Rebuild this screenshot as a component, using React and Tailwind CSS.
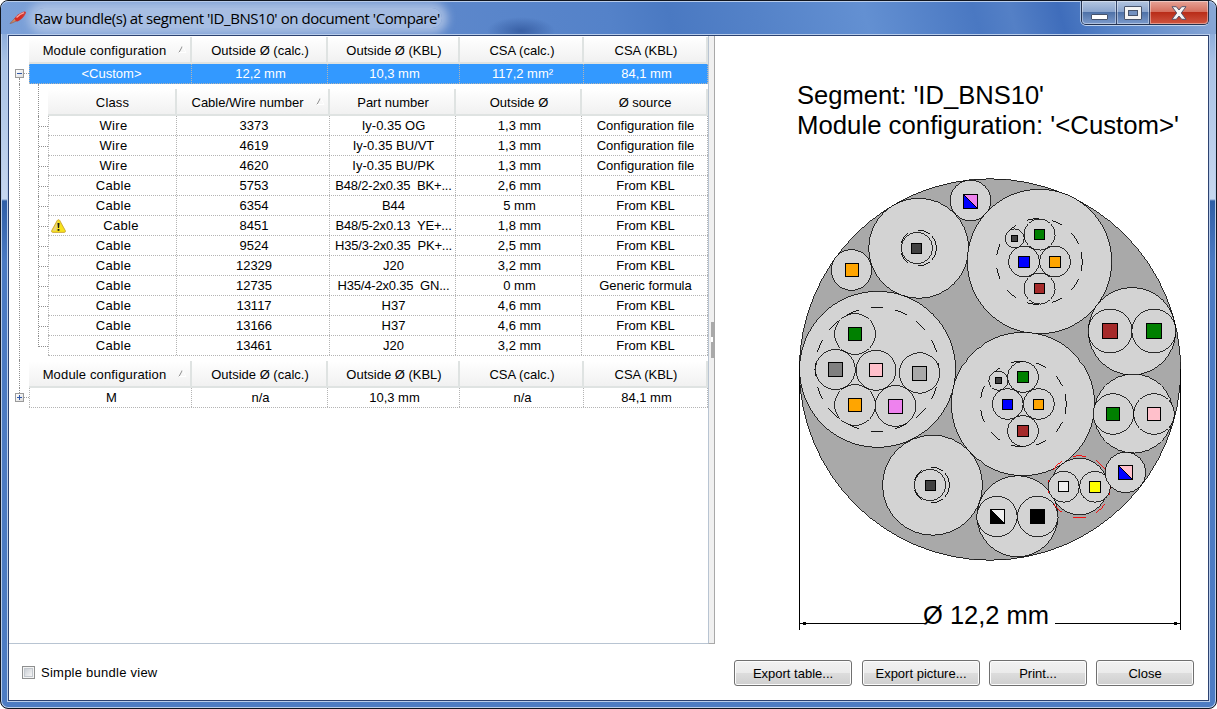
import React from 'react';

const MAIN_WIDTHS = ['w-[163px]', 'w-[136px]', 'w-[132px]', 'w-[124px]', 'w-[124px]'];
const CHILD_WIDTHS = ['w-[129px]', 'w-[153px]', 'w-[126px]', 'w-[126px]', 'w-[126px]'];
const MAIN_TITLES = ['Module configuration', 'Outside Ø (calc.)', 'Outside Ø (KBL)', 'CSA (calc.)', 'CSA (KBL)'];
const CHILD_TITLES = ['Class', 'Cable/Wire number', 'Part number', 'Outside Ø', 'Ø source'];

const ROWS = [
  ['Wire', '3373', 'Iy-0.35 OG', '1,3 mm', 'Configuration file'],
  ['Wire', '4619', 'Iy-0.35 BU/VT', '1,3 mm', 'Configuration file'],
  ['Wire', '4620', 'Iy-0.35 BU/PK', '1,3 mm', 'Configuration file'],
  ['Cable', '5753', 'B48/2-2x0.35\u00a0 BK+...', '2,6 mm', 'From KBL'],
  ['Cable', '6354', 'B44', '5 mm', 'From KBL'],
  ['Cable', '8451', 'B48/5-2x0.13\u00a0 YE+...', '1,8 mm', 'From KBL', true],
  ['Cable', '9524', 'H35/3-2x0.35\u00a0 PK+...', '2,5 mm', 'From KBL'],
  ['Cable', '12329', 'J20', '3,2 mm', 'From KBL'],
  ['Cable', '12735', 'H35/4-2x0.35\u00a0 GN...', '0 mm', 'Generic formula'],
  ['Cable', '13117', 'H37', '4,6 mm', 'From KBL'],
  ['Cable', '13166', 'H37', '4,6 mm', 'From KBL'],
  ['Cable', '13461', 'J20', '3,2 mm', 'From KBL'],
];

function SortMark() {
  return (
    <svg className="h-[9px] w-[9px] shrink-0" viewBox="0 0 9 9">
      <path d="M1 7.5L4.5 1" stroke="#8f8f8f" strokeWidth="1" fill="none" />
      <path d="M4.5 1L8 7.5H1" stroke="#ffffff" strokeWidth="1" fill="none" />
    </svg>
  );
}

function HeaderRow({ titles, widths, sorted }) {
  return (
    <div className="flex h-7 pt-px">
      {titles.map((t, i) => (
        <div
          key={t}
          className={`${widths[i]} flex items-center border-r-2 border-b-2 border-[#dfe3e2] bg-gradient-to-b from-white to-[#f1f1f1] pl-[2px]`}
        >
          <span className={`flex-1 pt-[2px] text-center whitespace-pre ${i === 0 ? 'tracking-[0.15px]' : ''}`}>{t}</span>
          {sorted === i && (
            <span className="mr-[3px] flex">
              <SortMark />
            </span>
          )}
        </div>
      ))}
    </div>
  );
}

function Expander({ open }) {
  return (
    <span className="flex h-[9px] w-[9px] items-center justify-center border border-[#9a9a9a] bg-gradient-to-br from-white to-[#dedede]">
      <svg className="h-[5px] w-[5px]" viewBox="0 0 5 5" shapeRendering="crispEdges">
        <rect x="0" y="2" width="5" height="1" fill="#2f56a8" />
        {!open && <rect x="2" y="0" width="1" height="5" fill="#2f56a8" />}
      </svg>
    </span>
  );
}

function Gutter({ open }) {
  return (
    <div className="flex w-5 shrink-0 flex-col">
      <div className="ml-[10px] h-[5px] w-0 border-l border-dotted border-[#8f8f8f]" hidden={open} />
      <div className={`flex items-center pl-[6px] ${open ? 'mt-[5px]' : ''}`}>
        <Expander open={open} />
        <span className="h-0 flex-1 border-t border-dotted border-[#a0a0a0]" />
      </div>
      {open && <div className="ml-[10px] w-0 flex-1 border-l border-dotted border-[#8f8f8f]" />}
    </div>
  );
}

function Warning() {
  return (
    <svg className="h-[14px] w-[15px]" viewBox="0 0 15 14">
      <path d="M7.5 0.7Q8.3 0.7 8.8 1.6L14.3 11.6Q14.8 13.4 13.4 13.4H1.6Q0.2 13.4 0.7 11.6L6.2 1.6Q6.7 0.7 7.5 0.7Z" fill="#f7e21c" stroke="#c9a43a" strokeWidth="0.9" />
      <path d="M7 1.8L1.7 11.8H5Z" fill="#e9cf86" />
      <path d="M6.5 4H8.5L8.1 9H6.9Z" fill="#1a1a1a" />
      <rect x="6.6" y="10" width="1.8" height="1.8" fill="#1a1a1a" />
    </svg>
  );
}

function MainRow({ cells, selected }) {
  return (
    <div
      className={`flex h-5 border-b border-dotted border-[#b4b4b4] ${selected ? 'bg-[#3399ff] text-white' : ''}`}
    >
      {cells.map((c, i) => (
        <div
          key={i}
          className={`${MAIN_WIDTHS[i]} flex items-center justify-center border-r border-dotted border-[#b4b4b4] pl-[2px] ${i === 0 ? 'border-l' : ''}`}
        >
          {c}
        </div>
      ))}
    </div>
  );
}

function cellTracking(i, text) {
  if (i === 0) return 'tracking-[0.35px]';
  if (text.endsWith('...')) return 'tracking-[-0.2px]';
  return '';
}

function ChildRow({ row, last }) {
  return (
    <div className="flex h-5">
      <div className="flex w-[19px] pl-[9px]">
        <div className={`w-full border-l border-dotted border-[#8f8f8f] ${last ? 'h-[11px]' : 'h-full'}`}>
          <div className="h-[11px] border-b border-dotted border-[#8f8f8f]" />
        </div>
      </div>
      <div className="flex border-b border-dotted border-[#b4b4b4]">
        {row.slice(0, 5).map((c, i) => (
          <div
            key={i}
            className={`${CHILD_WIDTHS[i]} flex items-center border-r border-dotted border-[#b4b4b4] pl-[2px] ${i === 0 ? 'border-l' : ''}`}
          >
            {i === 0 && row[5] && <Warning />}
            <span className={`flex-1 text-center whitespace-pre ${cellTracking(i, c)}`}>{c}</span>
          </div>
        ))}
      </div>
    </div>
  );
}

function Tree() {
  return (
    <div className="flex w-[699px] flex-col border-b border-[#b8c4d2] text-[13px] leading-[19px]">
      <div className="pl-5">
        <HeaderRow titles={MAIN_TITLES} widths={MAIN_WIDTHS} sorted={0} />
      </div>
      <div className="flex">
        <Gutter open />
        <MainRow selected cells={['<Custom>', '12,2 mm', '10,3 mm', '117,2 mm²', '84,1 mm']} />
      </div>
      <div className="flex">
        <div className="flex w-5 pl-[10px]">
          <div className="w-0 border-l border-dotted border-[#8f8f8f]" />
        </div>
        <div className="flex flex-col">
          <div className="flex">
            <div className="flex w-[19px] pl-[9px]">
              <div className="w-0 border-l border-dotted border-[#8f8f8f]" />
            </div>
            <div className="pt-1">
              <HeaderRow titles={CHILD_TITLES} widths={CHILD_WIDTHS} sorted={1} />
            </div>
          </div>
          {ROWS.map((r, i) => (
            <ChildRow key={r[1]} row={r} last={i === ROWS.length - 1} />
          ))}
          <div className="h-1" />
        </div>
      </div>
      <div className="flex">
        <div className="flex w-5 pl-[10px]">
          <div className="w-0 border-l border-dotted border-[#8f8f8f]" />
        </div>
        <HeaderRow titles={MAIN_TITLES} widths={MAIN_WIDTHS} sorted={0} />
      </div>
      <div className="flex">
        <Gutter />
        <MainRow cells={['M', 'n/a', '10,3 mm', 'n/a', '84,1 mm']} />
      </div>
    </div>
  );
}

/* Cross-section drawing */

const GREEN = '#008000';
const BROWN = '#a52a2a';
const ORANGE = '#ffa500';
const BLUE = '#0000ff';
const PINK = '#ffc0cb';
const VIOLET = '#ee82ee';
const DARK = '#404040';

// c: [cx, cy, r]; shield: [cx, cy, r, count, half dash deg, first half dash deg, colour]; cores: [cx, cy, r, square, colour, colour2]
const BUNDLE = [
  { c: [970.5, 200.5, 20.3], cores: [[970.5, 201, 0, 14, BLUE, VIOLET]] },
  { c: [851.5, 270, 20.3], cores: [[852, 270, 0, 13, ORANGE]] },
  { c: [918.7, 248.3, 50], shield: [918.5, 248, 18, 5, 20, 40, '#000'], cores: [[916.9, 248, 15.7, 10, DARK]] },
  {
    c: [1039.5, 261.5, 72.2],
    shield: [1039.3, 261.5, 43, 11, 8, 13, '#000'],
    cores: [
      [1039.5, 234.5, 15.5, 10, GREEN],
      [1014.7, 238.4, 9.5, 6, DARK],
      [1024, 261.5, 15.5, 11, BLUE],
      [1055, 261.5, 15.5, 11, ORANGE],
      [1039.5, 288.5, 15.5, 10, BROWN],
    ],
  },
  {
    c: [877.6, 369.3, 78],
    shield: [877, 369.3, 62, 16, 6, 6, '#000'],
    cores: [
      [855, 334, 20.4, 13, GREEN],
      [835.3, 369.5, 20, 14, '#808080'],
      [876, 370.3, 20, 13, PINK],
      [919.5, 373, 20.2, 14, '#a9a9a9'],
      [855, 405, 20.4, 13, ORANGE],
      [895.5, 406, 20.4, 14, VIOLET],
    ],
  },
  { c: [1132, 331.2, 43.7], cores: [[1110.2, 331, 22, 15, BROWN], [1153.8, 331, 22, 15, GREEN]] },
  {
    c: [1023, 404, 71.7],
    shield: [1023.3, 404, 43, 11, 8, 13, '#000'],
    cores: [
      [1023, 377, 15.5, 11, GREEN],
      [998.4, 380.7, 9.6, 6, DARK],
      [1007.7, 404, 15.5, 10, BLUE],
      [1038.8, 404, 15.5, 10, ORANGE],
      [1023, 431, 15.5, 11, BROWN],
    ],
  },
  { c: [1133.5, 413.5, 39.5], cores: [[1113.3, 414, 20.3, 13, GREEN], [1154, 414, 20.3, 13, PINK]] },
  { c: [1017.5, 516.3, 40.5], cores: [[997, 516.5, 20.2, 14, '#000000', '#f0f0f0'], [1037.7, 516.5, 20.3, 14, '#000000']] },
  {
    c: [1079.3, 486.5, 28.3],
    shield: [1079.3, 486.7, 31, 8, 12, 16, '#ff0000'],
    cores: [[1063.7, 486.7, 15.5, 10, '#f0f0f0'], [1095, 486.7, 15.5, 11, '#ffff00']],
  },
  { c: [1125.5, 472.5, 20.2], cores: [[1125.5, 472.5, 0, 14, BLUE, PINK]] },
  { c: [932.5, 485.2, 50], shield: [931.7, 485, 17.9, 5, 20, 40, '#000'], cores: [[930, 485, 15.7, 10, DARK]] },
];

function shieldPath([cx, cy, r, n, half, first]) {
  const pt = (deg) => {
    const a = (deg * Math.PI) / 180;
    return `${(cx + r * Math.cos(a)).toFixed(2)} ${(cy + r * Math.sin(a)).toFixed(2)}`;
  };
  let d = '';
  for (let k = 0; k < n; k++) {
    const mid = (k * 360) / n;
    const h = k === 0 ? first : half;
    d += `M${pt(mid - h)}A${r} ${r} 0 0 1 ${pt(mid + h)}`;
  }
  return d;
}

function Core({ core: [cx, cy, r, s, color, color2] }) {
  const x = Math.round(cx - s / 2 - 0.5) + 0.5;
  const y = Math.round(cy - s / 2 - 0.5) + 0.5;
  return (
    <g>
      {r > 0 && <circle cx={cx} cy={cy} r={r} fill="#d3d3d3" stroke="#000" strokeWidth="0.8" />}
      <rect x={x} y={y} width={s} height={s} fill={color} />
      {color2 && <path d={`M${x} ${y}H${x + s}V${y + s}Z`} fill={color2} />}
      {color2 && <path d={`M${x} ${y}L${x + s} ${y + s}`} stroke="#000" />}
      <rect x={x} y={y} width={s} height={s} fill="none" stroke="#000" />
    </g>
  );
}

function Diagram() {
  return (
    <svg className="h-[608px] w-[493px]" viewBox="715 36 493 608">
      <g fontFamily="'Liberation Sans', Arial, sans-serif" fontSize="25.5" fill="#000">
        <text x="797" y="104" textLength="247" lengthAdjust="spacingAndGlyphs">Segment: 'ID_BNS10'</text>
        <text x="797" y="134" textLength="382" lengthAdjust="spacingAndGlyphs">Module configuration: '&lt;Custom&gt;'</text>
        <text x="923" y="624" textLength="126" lengthAdjust="spacingAndGlyphs">Ø 12,2 mm</text>
      </g>
      <g shapeRendering="crispEdges" strokeWidth="1">
        <circle cx="990" cy="369.5" r="190.7" fill="#a9a9a9" stroke="#000" strokeWidth="0.8" />
        {BUNDLE.map((b, i) => (
          <g key={i}>
            <circle cx={b.c[0]} cy={b.c[1]} r={b.c[2]} fill="#d3d3d3" stroke="#000" strokeWidth="0.8" />
            {b.shield && <path d={shieldPath(b.shield)} fill="none" stroke={b.shield[6]} strokeWidth="0.9" />}
            {b.cores.map((c, j) => (
              <Core key={j} core={c} />
            ))}
          </g>
        ))}
        <path d="M799.5 369V630M1180.5 369V630M799 623.5H926M1055 623.5H1181" stroke="#000" fill="none" />
        <path d="M800 623.5L806 621.5V625.5ZM1180 623.5L1174 621.5V625.5Z" fill="#000" />
      </g>
    </svg>
  );
}

function Button({ children, width }) {
  return (
    <button
      className={`${width} h-[26px] rounded-[3px] border border-[#707070] bg-[linear-gradient(#f2f2f2_0%,#ebebeb_48%,#dddddd_50%,#cfcfcf_100%)] text-[13px] leading-none shadow-[inset_0_0_0_1px_#fcfcfc]`}
    >
      {children}
    </button>
  );
}

function AppIcon() {
  return (
    <svg className="h-4 w-[18px]" viewBox="0 0 18 16">
      <path d="M1 13.5L6 8L8.5 10.5L3 13Z" fill="#c98b6a" stroke="#8d4b35" strokeWidth="0.5" />
      <path d="M5.5 8.5Q8 4 15 1.5Q17.5 1 17 3Q14 9 8.5 11.5Q6 11 5.5 8.5Z" fill="#d42a22" />
      <path d="M7.5 7.5Q10 4.5 15 2.7" stroke="#f7a59c" strokeWidth="1.3" fill="none" />
    </svg>
  );
}

function CaptionButtons() {
  return (
    <div className="flex h-6 rounded-b-[5px] border border-t-0 border-[#24324f] shadow-[0_1px_0_#c3d5ee,-1px_0_0_#a9c2e6]">
      <div className="flex w-[35px] items-end justify-center rounded-bl-[4px] border-r border-[#34466b] bg-[linear-gradient(#b3c5e0_0%,#8ba5cd_46%,#4f72a8_50%,#7c9bcc_100%)] pb-[4px] shadow-[inset_0_0_0_1px_#ffffff66]">
        <span className="h-[6px] w-[17px] rounded-[1px] border border-[#47536b] bg-white" />
      </div>
      <div className="flex w-[33px] items-center justify-center border-r border-[#34466b] bg-[linear-gradient(#b3c5e0_0%,#8ba5cd_46%,#4f72a8_50%,#7c9bcc_100%)] shadow-[inset_0_0_0_1px_#ffffff66]">
        <span className="flex h-[14px] w-[18px] rounded-[1px] border border-[#47536b] bg-[#f4f4f4] p-[3px]">
          <span className="flex-1 border border-[#47536b] bg-[#7391c0]" />
        </span>
      </div>
      <div className="flex w-[58px] items-center justify-center rounded-br-[4px] bg-[linear-gradient(#e6a397_0%,#d5705f_46%,#b92d19_50%,#cf5540_100%)] shadow-[inset_0_0_0_1px_#ffffff66]">
        <svg className="h-[14px] w-[16px]" viewBox="0 0 16 14">
          <path d="M1 0.7H5.3L8 4L10.7 0.7H15L10.3 7L15 13.3H10.7L8 10L5.3 13.3H1L5.7 7Z" fill="#f5f5f5" stroke="#57546a" strokeWidth="1" />
        </svg>
      </div>
    </div>
  );
}

export default function App() {
  return (
    <div className="h-[709px] w-[1217px] overflow-hidden bg-white font-['Liberation_Sans',Arial,sans-serif] text-black">
      <div className="flex h-full flex-col rounded-[8px] border border-[#10151f] bg-[linear-gradient(#6c94d0_0px,#a9c2e5_60px,#c6d7ef_198px,#2f5ea6_200px,#4b7ac2_260px,#4d7cc3_100%)] shadow-[inset_0_0_0_1px_#b9cdeb]">
        <div className="flex h-[33px] shrink-0 justify-between overflow-hidden rounded-t-[7px] bg-[radial-gradient(ellipse_34px_14px_at_520px_30px,#2a4f94b0,#2a4f9400),linear-gradient(75deg,#7ba0d8_0%,#6f95d0_25%,#5c87cb_37%,#5482c9_50%,#4a79c2_55%,#5482c8_62%,#6390d2_71%,#4a78c2_80%,#5480c6_83%,#3f6dbb_87%,#5784c8_91%,#8aa8d6_100%)] pl-[8px] shadow-[inset_0_1px_0_#b9cdeb]">
          <div className="flex items-center gap-[7px] pt-px">
            <AppIcon />
            <div className="rounded-[12px] bg-[#b4c7e6cc] shadow-[0_0_9px_6px_#b4c7e6cc]">
              <div className="w-[408px] text-[15px] leading-5 whitespace-nowrap font-['Open_Sans','Noto_Sans',sans-serif] tracking-[-0.44px]">
                Raw bundle(s) at segment 'ID_BNS10' on document 'Compare'
              </div>
            </div>
          </div>
          <div className="mr-[7px]">
            <CaptionButtons />
          </div>
        </div>
        <div className="mt-px ml-[7px] flex h-[666px] w-[1201px] shrink-0 flex-col border border-[#2c4270] bg-white shadow-[0_0_0_1px_#b9cdeb]">
          <div className="flex h-[608px]">
            <Tree />
            <div className="flex w-[7px] flex-col items-end justify-center border-r border-b border-l border-r-[#a8a8a8] border-b-[#a8a8a8] border-l-[#b8c4d2] bg-[#f0f0f0]">
              <div className="flex h-9 w-[3px] items-center bg-[#a9a9a9]">
                <span className="h-[5px] w-[2px] bg-white" />
              </div>
            </div>
            <Diagram />
          </div>
          <div className="flex flex-1 items-start justify-between pt-4 pr-[14px] pl-[13px] text-[13px]">
            <label className="flex items-center gap-[6px] pt-[3px] tracking-[0.25px]">
              <span className="flex h-[13px] w-[13px] border border-[#8e8f8f] bg-[#f4f4f4] p-[1px]">
                <span className="flex-1 border border-[#c3c8ce] bg-gradient-to-br from-[#cbcfd5] to-[#f6f6f6]" />
              </span>
              Simple bundle view
            </label>
            <div className="flex">
              <Button width="w-[118px] mr-[10px]">Export table...</Button>
              <Button width="w-[118px] mr-[9px]">Export picture...</Button>
              <Button width="w-[98px] mr-[9px]">Print...</Button>
              <Button width="w-[98px]">Close</Button>
            </div>
          </div>
        </div>
      </div>
    </div>
  );
}
